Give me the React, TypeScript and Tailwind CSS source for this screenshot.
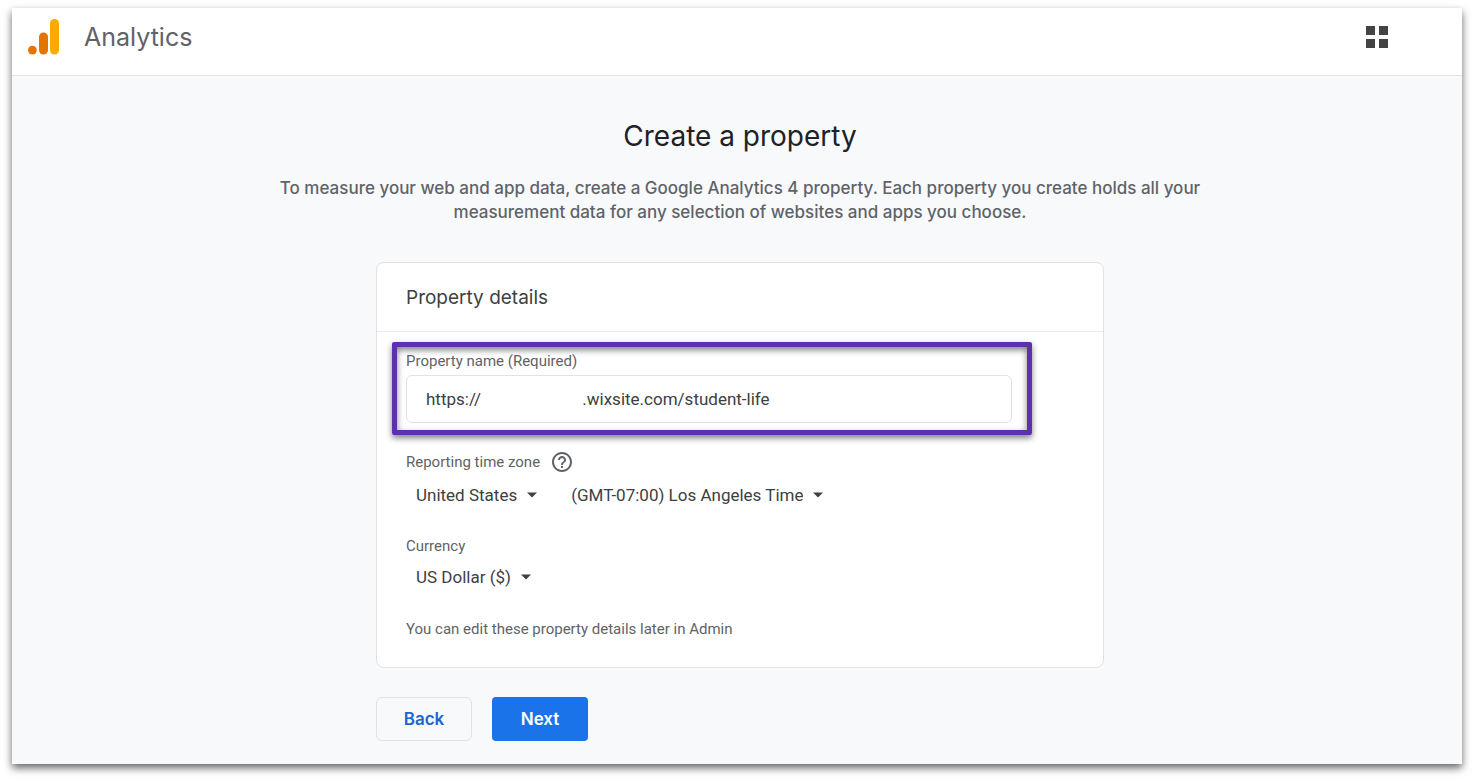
import { useState } from "react";

const hiddenPart = "\u00a0".repeat(24);

function AnalyticsLogo() {
  return (
    <svg className="h-9 w-8 shrink-0" viewBox="0 0 32 36" aria-hidden="true">
      <rect x="22" y="0" width="9" height="35.5" rx="4.5" fill="#f9ab00" />
      <rect x="11" y="13.5" width="9" height="22" rx="4.5" fill="#e37400" />
      <circle cx="4.4" cy="31.1" r="4.4" fill="#e37400" />
    </svg>
  );
}

function HelpIcon() {
  return (
    <svg className="size-6" viewBox="0 0 24 24" fill="#5f6368" aria-hidden="true">
      <path d="M11 18h2v-2h-2v2zm1-16C6.48 2 2 6.48 2 12s4.48 10 10 10 10-4.48 10-10S17.52 2 12 2zm0 18c-4.41 0-8-3.59-8-8s3.59-8 8-8 8 3.59 8 8-3.59 8-8 8zm0-14c-2.21 0-4 1.79-4 4h2c0-1.1.9-2 2-2s2 .9 2 2c0 2-3 1.75-3 5h2c0-2.25 3-2.5 3-5 0-2.21-1.79-4-4-4z" />
    </svg>
  );
}

function InlineSelect({ label, id, options }: { label?: string; id: string; options: string[] }) {
  return (
    <div className="grid items-center">
      <select
        id={id}
        aria-label={label}
        className="col-start-1 row-start-1 field-sizing-content appearance-none bg-transparent pr-5 text-[17px] leading-6 text-[#3c4043] outline-none"
      >
        {options.map((option) => (
          <option key={option}>{option}</option>
        ))}
      </select>
      <svg
        className="pointer-events-none col-start-1 row-start-1 h-1.5 w-2.5 justify-self-end"
        viewBox="0 0 10 6"
        fill="#3c4043"
        aria-hidden="true"
      >
        <path d="M0 0.5h10L5 5.5z" />
      </svg>
    </div>
  );
}

export default function App() {
  const [name, setName] = useState(`https://${hiddenPart}.wixsite.com/student-life`);

  return (
    <div className="flex min-h-screen flex-col bg-white px-3 pt-2 pb-[17px] font-['Roboto',sans-serif]">
      <div className="flex flex-1 flex-col bg-[#f8f9fb] shadow-[0_4px_8px_rgba(0,0,0,0.6)]">
        <header className="flex h-17 items-center justify-between border-b border-[#e0e2e5] bg-white pr-[74px] pb-2.5 pl-4">
          <div className="flex items-center gap-6">
            <AnalyticsLogo />
            <span className="font-['Inter',sans-serif] text-[25px] leading-8 text-[#5f6368]">Analytics</span>
          </div>
          <button type="button" aria-label="Apps" className="block">
            <svg className="size-[22px]" viewBox="0 0 22 22" fill="#444444" aria-hidden="true">
              <path d="M0 0h9v9H0zM13 0h9v9h-9zM0 13h9v9H0zM13 13h9v9h-9z" />
            </svg>
          </button>
        </header>

        <main className="flex flex-col items-center pt-10 pb-5 pl-1.5">
          <h1 className="text-center font-['Inter',sans-serif] text-[28px] leading-10 text-[#202124]">
            Create a property
          </h1>
          <p className="mt-5 max-w-[960px] text-center font-['Inter',sans-serif] text-[17px] leading-6 font-medium text-[#5f6368]">
            To measure your web and app data, create a Google Analytics 4 property. Each property you create holds all your
            measurement data for any selection of websites and apps you choose.
          </p>

          <form className="mt-[38px] w-full max-w-[728px]" onSubmit={(e) => e.preventDefault()}>
            <section className="rounded-lg border border-[#e0e2e5] bg-white">
              <h2 className="border-b border-[#e8eaed] px-[29px] pt-[21px] pb-[19px] font-['Inter',sans-serif] text-[19px] leading-7 text-[#3c4043]">
                Property details
              </h2>

              <div className="px-[15px] pt-2.5 pb-7">
                {/* highlighted field */}
                <div className="max-w-[640px] rounded-xs border-5 border-[#5c31ab] px-[9px] pt-1 pb-[7px] shadow-[0_3px_6px_rgba(0,0,0,0.5),inset_0_3px_6px_rgba(0,0,0,0.5)]">
                  <label htmlFor="name" className="block text-[15px] leading-5 text-[#5f6368]">
                    Property name (Required)
                  </label>
                  <input
                    id="name"
                    value={name}
                    onChange={(e) => setName(e.target.value)}
                    className="mt-1 h-12 w-full max-w-[606px] rounded-md border border-[#e0e2e5] bg-white px-[19px] text-[17px] text-[#3c4043] outline-none"
                  />
                </div>

                <div className="px-3.5 text-[15px] leading-5 text-[#5f6368]">
                  <div className="mt-[15px] flex items-center gap-2.5">
                    <label htmlFor="country">Reporting time zone</label>
                    <button type="button" aria-label="About reporting time zone">
                      <HelpIcon />
                    </button>
                  </div>
                  <div className="mt-[9px] flex gap-[34px] pl-2.5">
                    <InlineSelect id="country" options={["United States"]} />
                    <InlineSelect id="zone" label="Time zone" options={["(GMT-07:00) Los Angeles Time"]} />
                  </div>
                  <label htmlFor="currency" className="mt-[29px] block">
                    Currency
                  </label>
                  <div className="mt-[9px] flex pl-2.5">
                    <InlineSelect id="currency" options={["US Dollar ($)"]} />
                  </div>
                  <p className="mt-[30px]">You can edit these property details later in Admin</p>
                </div>
              </div>
            </section>

            <div className="mt-[29px] flex gap-5 font-['Inter',sans-serif] text-[17px] leading-6 font-semibold">
              <button type="button" className="h-11 w-24 rounded-md border border-[#e0e2e5] text-[#1967d2]">
                Back
              </button>
              <button type="submit" className="h-11 w-24 rounded-sm bg-[#1a73e8] text-white">
                Next
              </button>
            </div>
          </form>
        </main>
      </div>
    </div>
  );
}
